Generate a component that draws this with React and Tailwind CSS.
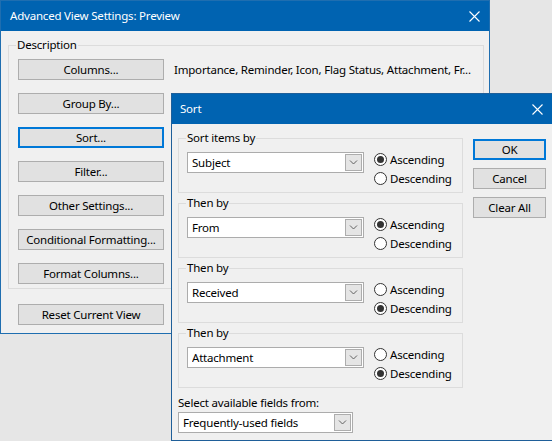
import React from "react";

const font = { fontFamily: '"Noto Sans", "Liberation Sans", sans-serif' };

function CloseX() {
  return (
    <div className="w-[30px] h-full flex items-center justify-center">
      <svg width="11" height="11" viewBox="0 0 11 11">
        <path d="M0.5 0.5 L10.5 10.5 M10.5 0.5 L0.5 10.5" stroke="#ffffff" strokeWidth="1.1" fill="none" />
      </svg>
    </div>
  );
}

function Btn({ children, focused = false, className = "" }) {
  return (
    <div
      className={`flex items-center justify-center h-[21px] bg-[#e1e1e1] text-black ${
        focused ? "border-2 border-[#0078d7]" : "border border-[#adadad]"
      } ${className}`}
    >
      {children}
    </div>
  );
}

function Combo({ value, width = "w-[177px]" }) {
  return (
    <div className={`flex items-center ${width} h-[21px] border border-[#acacac] bg-white pl-[4px] pr-[1px]`}>
      <span className="flex-1 truncate">{value}</span>
      <div className="w-[17px] h-[17px] border border-[#adadad] bg-[#e5e5e5] flex items-center justify-center">
        <svg width="9" height="5" viewBox="0 0 9 5">
          <path d="M1 0.5 L4.5 4 L8 0.5" stroke="#606060" strokeWidth="1" fill="none" />
        </svg>
      </div>
    </div>
  );
}

function Radio({ label, checked }) {
  return (
    <div className="flex items-center h-[19px]">
      <span className="w-[13px] h-[13px] rounded-full border border-[#333333] bg-white flex items-center justify-center">
        {checked && <span className="w-[7px] h-[7px] rounded-full bg-[#333333]" />}
      </span>
      <span className="ml-[3px]">{label}</span>
    </div>
  );
}

function SortGroup({ title, value, asc, className = "" }) {
  return (
    <fieldset className={`w-[285px] min-w-0 border border-[#dcdcdc] pl-[8px] pt-[4px] pb-[4px] ${className}`}>
      <legend className="ml-[-1px] px-[1px] leading-[16px]">{title}</legend>
      <div className="flex items-start">
        <div className="mt-[2px]">
          <Combo value={value} />
        </div>
        <div className="ml-[10px] flex flex-col">
          <Radio label="Ascending" checked={asc} />
          <Radio label="Descending" checked={!asc} />
        </div>
      </div>
    </fieldset>
  );
}

export default function App() {
  const backButtons = [
    "Group By...",
    "Sort...",
    "Filter...",
    "Other Settings...",
    "Conditional Formatting...",
    "Format Columns...",
  ];
  return (
    <div
      className="relative w-[552px] h-[441px] overflow-hidden bg-[#e6e6e6] text-[11.5px] tracking-[-0.2px] text-black leading-[16px]"
      style={font}
    >
      {/* Back dialog */}
      <div className="absolute left-0 top-0 w-[490px] h-[334px] border border-[#1f6eb0] bg-[#f0f0f0] flex flex-col">
        <div className="h-[30px] bg-[#0063b1] text-white flex items-center pl-[9px]">
          <span className="flex-1">Advanced View Settings: Preview</span>
          <CloseX />
        </div>
        <div className="pl-[7px] pt-[6px] flex flex-col">
          <fieldset className="w-[476px] min-w-0 border border-[#dcdcdc] pl-[9px] pt-[6px] pb-[4px]">
            <legend className="ml-[-2px] px-[1px] leading-[16px]">Description</legend>
            <div className="flex flex-col gap-[13px]">
              <div className="flex items-center">
                <Btn className="w-[146px] shrink-0">Columns...</Btn>
                <span className="ml-[10px] whitespace-nowrap">
                  Importance, Reminder, Icon, Flag Status, Attachment, Fr...
                </span>
              </div>
              {backButtons.map((b) => (
                <Btn key={b} className="w-[146px]" focused={b === "Sort..."}>
                  {b}
                </Btn>
              ))}
            </div>
          </fieldset>
          <Btn className="w-[146px] ml-[10px] mt-[15px]">Reset Current View</Btn>
        </div>
      </div>

      {/* Sort dialog */}
      <div className="absolute left-[171px] top-[93px] w-[382px] h-[348px] border border-[#1f5f99] bg-[#f0f0f0] flex flex-col">
        <div className="h-[30px] bg-[#0063b1] text-white flex items-center pl-[8px]">
          <span className="flex-1">Sort</span>
          <CloseX />
        </div>
        <div className="flex pl-[6px] pt-[6px]">
          <div className="flex flex-col">
            <SortGroup title="Sort items by" value="Subject" asc={true} />
            <SortGroup title="Then by" value="From" asc={true} className="mt-[2px]" />
            <SortGroup title="Then by" value="Received" asc={false} className="mt-[2px]" />
            <SortGroup title="Then by" value="Attachment" asc={false} className="mt-[2px]" />
            <div className="mt-[7px]">Select available fields from:</div>
            <div className="mt-[1px]">
              <Combo value="Frequently-used fields" width="w-[175px]" />
            </div>
          </div>
          <div className="ml-[10px] mt-[9px] flex flex-col gap-[8px]">
            <Btn className="w-[73px]" focused>OK</Btn>
            <Btn className="w-[73px]">Cancel</Btn>
            <Btn className="w-[73px]">Clear All</Btn>
          </div>
        </div>
      </div>
    </div>
  );
}
